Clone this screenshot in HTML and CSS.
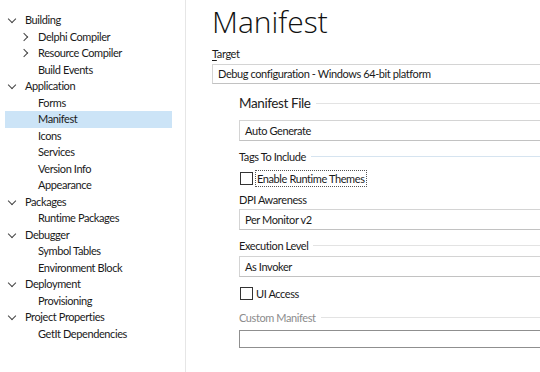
FILE: index.html
```html
<!DOCTYPE html>
<html lang="en">
<head>
    <meta charset="UTF-8">
    <title>Project Options - Manifest</title>
    <link rel="stylesheet" href="styles.css">
</head>
<body>
    <div class="sidebar">
        <ul class="tree">
            <li class="node open"><span class="chev"></span>Building</li>
            <li class="node child closed"><span class="chev"></span>Delphi Compiler</li>
            <li class="node child closed"><span class="chev"></span>Resource Compiler</li>
            <li class="node child">Build Events</li>
            <li class="node open"><span class="chev"></span>Application</li>
            <li class="node child">Forms</li>
            <li class="node child selected">Manifest</li>
            <li class="node child">Icons</li>
            <li class="node child">Services</li>
            <li class="node child">Version Info</li>
            <li class="node child">Appearance</li>
            <li class="node open"><span class="chev"></span>Packages</li>
            <li class="node child">Runtime Packages</li>
            <li class="node open"><span class="chev"></span>Debugger</li>
            <li class="node child">Symbol Tables</li>
            <li class="node child">Environment Block</li>
            <li class="node open"><span class="chev"></span>Deployment</li>
            <li class="node child">Provisioning</li>
            <li class="node open"><span class="chev"></span>Project Properties</li>
            <li class="node child">GetIt Dependencies</li>
        </ul>
    </div>

    <div class="main">
        <div class="title">Manifest</div>
        <div class="label target-label"><u>T</u>arget</div>
        <div class="box target-box">Debug configuration - Windows 64-bit platform</div>

        <div class="group">
            <div class="group-head big"><span>Manifest File</span><i></i></div>
            <div class="box auto-box">Auto Generate</div>

            <div class="group-head tags"><span>Tags To Include</span><i class="blue"></i></div>
            <div class="check themes"><span class="tick"></span><span class="focus">Enable Runtime Themes</span></div>

            <div class="label dpi">DPI Awareness</div>
            <div class="box dpi-box">Per Monitor v2</div>

            <div class="group-head exec"><span>Execution Level</span><i></i></div>
            <div class="box exec-box">As Invoker</div>

            <div class="check ui"><span class="tick"></span><span>UI Access</span></div>

            <div class="group-head custom disabled"><span>Custom Manifest</span><i></i></div>
            <div class="box custom-box"></div>
        </div>
    </div>
</body>
</html>
```

FILE: styles.css
```css
body {
    margin: 0;
    width: 540px;
    height: 372px;
    overflow: hidden;
    display: flex;
    background: #ffffff;
    color: #1a1a1a;
    font-family: Lato, "Open Sans", sans-serif;
    font-size: 11px;
    letter-spacing: -0.4px;
}

/* tree on the left */
.sidebar {
    width: 185px;
    flex-shrink: 0;
    border-right: 1px solid #e6e6e6;
    padding-top: 12px;
}

.tree {
    list-style: none;
    margin: 0;
    padding: 0;
}

.node {
    height: 16.5px;
    line-height: 16.5px;
    padding-left: 25px;
    position: relative;
    white-space: nowrap;
}

.node.child {
    padding-left: 38px;
}

.node.selected {
    background: #cce4f7;
    margin-left: 5px;
    width: 167px;
    padding-left: 33px;
    box-sizing: border-box;
}

.chev {
    position: absolute;
    width: 5px;
    height: 5px;
    border-right: 1px solid #444;
    border-bottom: 1px solid #444;
}

.open .chev {
    left: 9px;
    top: 4px;
    transform: rotate(45deg);
}

.closed .chev {
    left: 21px;
    top: 5px;
    transform: rotate(-45deg);
}

/* form on the right */
.main {
    flex: 1;
    padding-left: 26px;
    min-width: 0;
}

.title {
    margin-top: 6px;
    height: 32px;
    line-height: 32px;
    font-family: "Open Sans", sans-serif;
    font-size: 30px;
    font-weight: 300;
    letter-spacing: 0;
    color: #111;
}

.label {
    height: 16px;
    line-height: 16px;
}

.target-label {
    margin-top: 8px;
}

.target-label u {
    text-decoration-thickness: 1px;
    text-underline-offset: 2px;
}

.box {
    box-sizing: border-box;
    border: 1px solid #d4d4d4;
    border-right: none;
    border-bottom-color: #c2c2c2;
    padding-left: 5px;
    line-height: 18px;
    background: #fff;
}

.target-box {
    margin-top: 2px;
    height: 20px;
}

.group {
    padding-left: 27px;
}

.group-head {
    display: flex;
    align-items: center;
    gap: 5px;
    height: 16px;
    white-space: nowrap;
}

.group-head i {
    flex: 1;
    height: 1px;
    background: #e3e3e3;
    margin-top: 1px;
}

.group-head i.blue {
    background: #d6e4f0;
}

.group-head.big {
    margin-top: 10px;
    height: 18px;
    font-size: 13.5px;
    color: #222;
}

.auto-box {
    margin-top: 8px;
    height: 21px;
    line-height: 19px;
}

.tags {
    margin-top: 7px;
}

.check {
    display: flex;
    align-items: center;
    gap: 3px;
    height: 16px;
}

.tick {
    width: 13px;
    height: 13px;
    box-sizing: border-box;
    border: 1px solid #333;
    background: #fff;
    margin-left: 1px;
}

.focus {
    outline: 1px dotted #555;
    outline-offset: 0;
    padding: 0 1px;
    line-height: 15px;
}

.themes {
    margin-top: 6px;
}

.dpi {
    margin-top: 6px;
}

.dpi-box {
    margin-top: 1px;
    height: 21px;
    line-height: 19px;
}

.exec {
    margin-top: 7px;
}

.exec-box {
    margin-top: 3px;
    height: 21px;
    line-height: 19px;
}

.ui {
    margin-top: 8px;
}

.custom {
    margin-top: 8px;
}

.disabled {
    color: #8c8c8c;
}

.custom-box {
    margin-top: 5px;
    height: 18px;
    border-color: #8f8f8f;
}
```
